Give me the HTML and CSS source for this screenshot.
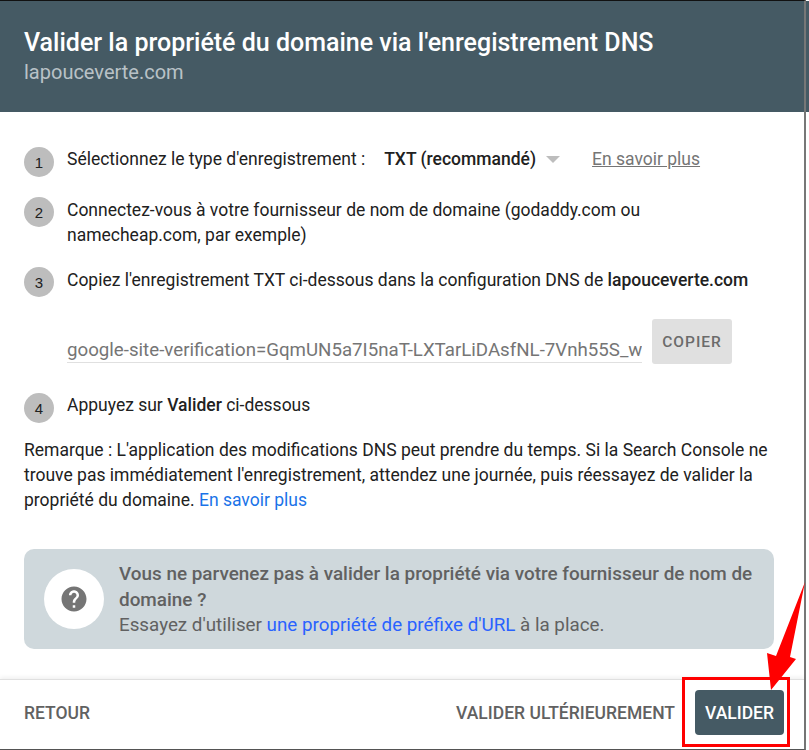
FILE: index.html
```html
<!DOCTYPE html>
<html lang="fr">
<head>
    <meta charset="UTF-8">
    <meta name="viewport" content="width=device-width, initial-scale=1.0">
    <title>Valider la propriété du domaine</title>
    <link rel="stylesheet" href="styles.css">
</head>
<body>
    <div class="dialog">
        <div class="header">
            <h1>Valider la propriété du domaine via l'enregistrement DNS</h1>
            <div class="domain">lapouceverte.com</div>
        </div>
        <div class="content">
            <div class="step step-first">
                <span class="num">1</span>
                <div class="step-text type-row">
                    <span>Sélectionnez le type d'enregistrement :</span>
                    <b class="type">TXT (recommandé)</b>
                    <span class="caret"></span>
                    <a class="more" href="#">En savoir plus</a>
                </div>
            </div>
            <div class="step step-second">
                <span class="num">2</span>
                <div class="step-text">Connectez-vous à votre fournisseur de nom de domaine (godaddy.com ou namecheap.com, par exemple)</div>
            </div>
            <div class="step step-third">
                <span class="num">3</span>
                <div class="step-text">Copiez l'enregistrement TXT ci-dessous dans la configuration DNS de <b>lapouceverte.com</b></div>
            </div>
            <div class="record">
                <div class="record-value">google-site-verification=GqmUN5a7I5naT-LXTarLiDAsfNL-7Vnh55S_w</div>
                <button class="copy">COPIER</button>
            </div>
            <div class="step step-fourth">
                <span class="num">4</span>
                <div class="step-text">Appuyez sur <b>Valider</b> ci-dessous</div>
            </div>
            <p class="note">Remarque : L'application des modifications DNS peut prendre du temps. Si la Search Console ne trouve pas immédiatement l'enregistrement, attendez une journée, puis réessayez de valider la propriété du domaine. <a href="#">En savoir plus</a></p>
            <div class="help">
                <div class="help-icon">
                    <svg width="30" height="30" viewBox="0 0 24 24"><path fill="#757575" d="M12 2C6.48 2 2 6.48 2 12s4.48 10 10 10 10-4.48 10-10S17.52 2 12 2zm1 17h-2v-2h2v2zm2.07-7.75l-.9.92C13.45 12.9 13 13.5 13 15h-2v-.5c0-1.1.45-2.1 1.17-2.83l1.24-1.26c.37-.36.59-.86.59-1.41 0-1.1-.9-2-2-2s-2 .9-2 2H8c0-2.21 1.79-4 4-4s4 1.79 4 4c0 .88-.36 1.68-.93 2.25z"/></svg>
                </div>
                <div class="help-text">
                    <b>Vous ne parvenez pas à valider la propriété via votre fournisseur de nom de domaine ?</b><br>
                    Essayez d'utiliser <a href="#">une propriété de préfixe d'URL</a> à la place.
                </div>
            </div>
        </div>
        <div class="footer">
            <a class="back" href="#">RETOUR</a>
            <a class="later" href="#">VALIDER ULTÉRIEUREMENT</a>
            <button class="validate">VALIDER</button>
        </div>
    </div>
    <div class="page-behind"></div>
    <div class="mark-box"></div>
    <svg class="mark-arrow" width="60" height="120" viewBox="0 0 60 120"><polygon fill="#ff0000" points="56,2 27,76 18,73 22,110 47,79 41,77"/></svg>
</body>
</html>
```

FILE: styles.css
```css
body {
    margin: 0;
    width: 809px;
    height: 750px;
    overflow: hidden;
    position: relative;
    background-color: #fff;
    font-family: Roboto, sans-serif;
    font-size: 17.5px;
    line-height: 25px;
    color: #212121;
}
.dialog {
    width: 804px;
    height: 748px;
    border-top: 1px solid #111;
    border-right: 2px solid #777;
    border-bottom: 1px solid #555;
    display: flex;
    flex-direction: column;
}
.header {
    height: 111px;
    box-sizing: border-box;
    padding: 26px 24px 0;
    background-color: #455a64;
}
h1 {
    margin: 0;
    font-size: 25px;
    line-height: 31px;
    font-weight: 500;
    color: #fff;
}
.domain {
    font-size: 20px;
    line-height: 28px;
    color: #b9c2c7;
}
.content {
    flex: 1;
    padding: 0 30px 0 24px;
    min-height: 0;
}
.step {
    display: flex;
    align-items: flex-start;
}
.step-first {
    margin-top: 35px;
}
.step-second {
    margin-top: 20px;
}
.step-second .step-text {
    max-width: 620px;
    padding-top: 1px;
}
.step-third {
    margin-top: 19px;
}
.step-third .step-text {
    padding-top: 1px;
}
.step-fourth {
    margin-top: 29px;
}
.num {
    flex: none;
    width: 30px;
    height: 30px;
    margin-right: 13px;
    border-radius: 50%;
    background-color: #bdbdbd;
    font-family: "Liberation Sans", sans-serif;
    font-size: 15px;
    line-height: 32px;
    text-align: center;
}
.step-text {
    flex: 1;
}
.type-row {
    display: flex;
    align-items: center;
}
.type {
    margin-left: 19px;
}
.caret {
    width: 0;
    height: 0;
    margin-left: 10px;
    border-left: 7px solid transparent;
    border-right: 7px solid transparent;
    border-top: 7px solid #bdbdbd;
}
.more {
    margin-left: 32px;
    color: #757575;
}
b {
    font-weight: 500;
}
.record {
    display: flex;
    align-items: flex-start;
    margin-top: 22px;
    margin-left: 43px;
}
.record-value {
    width: 575px;
    padding-top: 19px;
    line-height: 24px;
    overflow: hidden;
    white-space: nowrap;
    border-bottom: 1px solid #e0e0e0;
    font-size: 18.7px;
    color: #757575;
}
.copy {
    width: 80px;
    height: 45px;
    margin-left: 10px;
    border: none;
    border-radius: 3px;
    background-color: #e0e0e0;
    color: #6b6b6b;
    font-family: Roboto, sans-serif;
    font-size: 15.5px;
    font-weight: 500;
    letter-spacing: 1px;
}
.note {
    margin: 15px 0 0;
}
.note a {
    color: #1a73e8;
    text-decoration: none;
}
.help {
    display: flex;
    align-items: center;
    height: 100px;
    margin-top: 36px;
    padding-left: 20px;
    border-radius: 10px;
    background-color: #cfd8dc;
    color: #616161;
}
.help-icon {
    flex: none;
    display: flex;
    align-items: center;
    justify-content: center;
    width: 60px;
    height: 60px;
    margin-right: 15px;
    border-radius: 50%;
    background-color: #fff;
}
.help-text {
    font-size: 18.8px;
}
.help-text b {
    font-size: 18.9px;
}
.help-text a {
    color: #2962ff;
    text-decoration: none;
}
.footer {
    display: flex;
    align-items: center;
    height: 66px;
    padding: 0 20px 3px 24px;
    border-top: 1px solid #e0e0e0;
    box-shadow: 0 -2px 4px rgba(0, 0, 0, 0.06);
    font-weight: 500;
}
.footer a {
    color: #616161;
    text-decoration: none;
}
.back {
    flex: 1;
}
.validate {
    width: 89px;
    height: 45px;
    margin-left: 20px;
    margin-bottom: 1px;
    border: none;
    border-radius: 4px;
    background-color: #455a64;
    color: #fff;
    font-family: Roboto, sans-serif;
    font-size: 17.5px;
    font-weight: 500;
}
.page-behind {
    position: absolute;
    left: 806px;
    top: 1px;
    width: 3px;
    height: 111px;
    background-color: #455a64;
}
.mark-box {
    position: absolute;
    left: 682px;
    top: 677px;
    width: 108px;
    height: 70px;
    box-sizing: border-box;
    border: 3px solid #f00;
}
.mark-arrow {
    position: absolute;
    left: 749px;
    top: 580px;
}
```
